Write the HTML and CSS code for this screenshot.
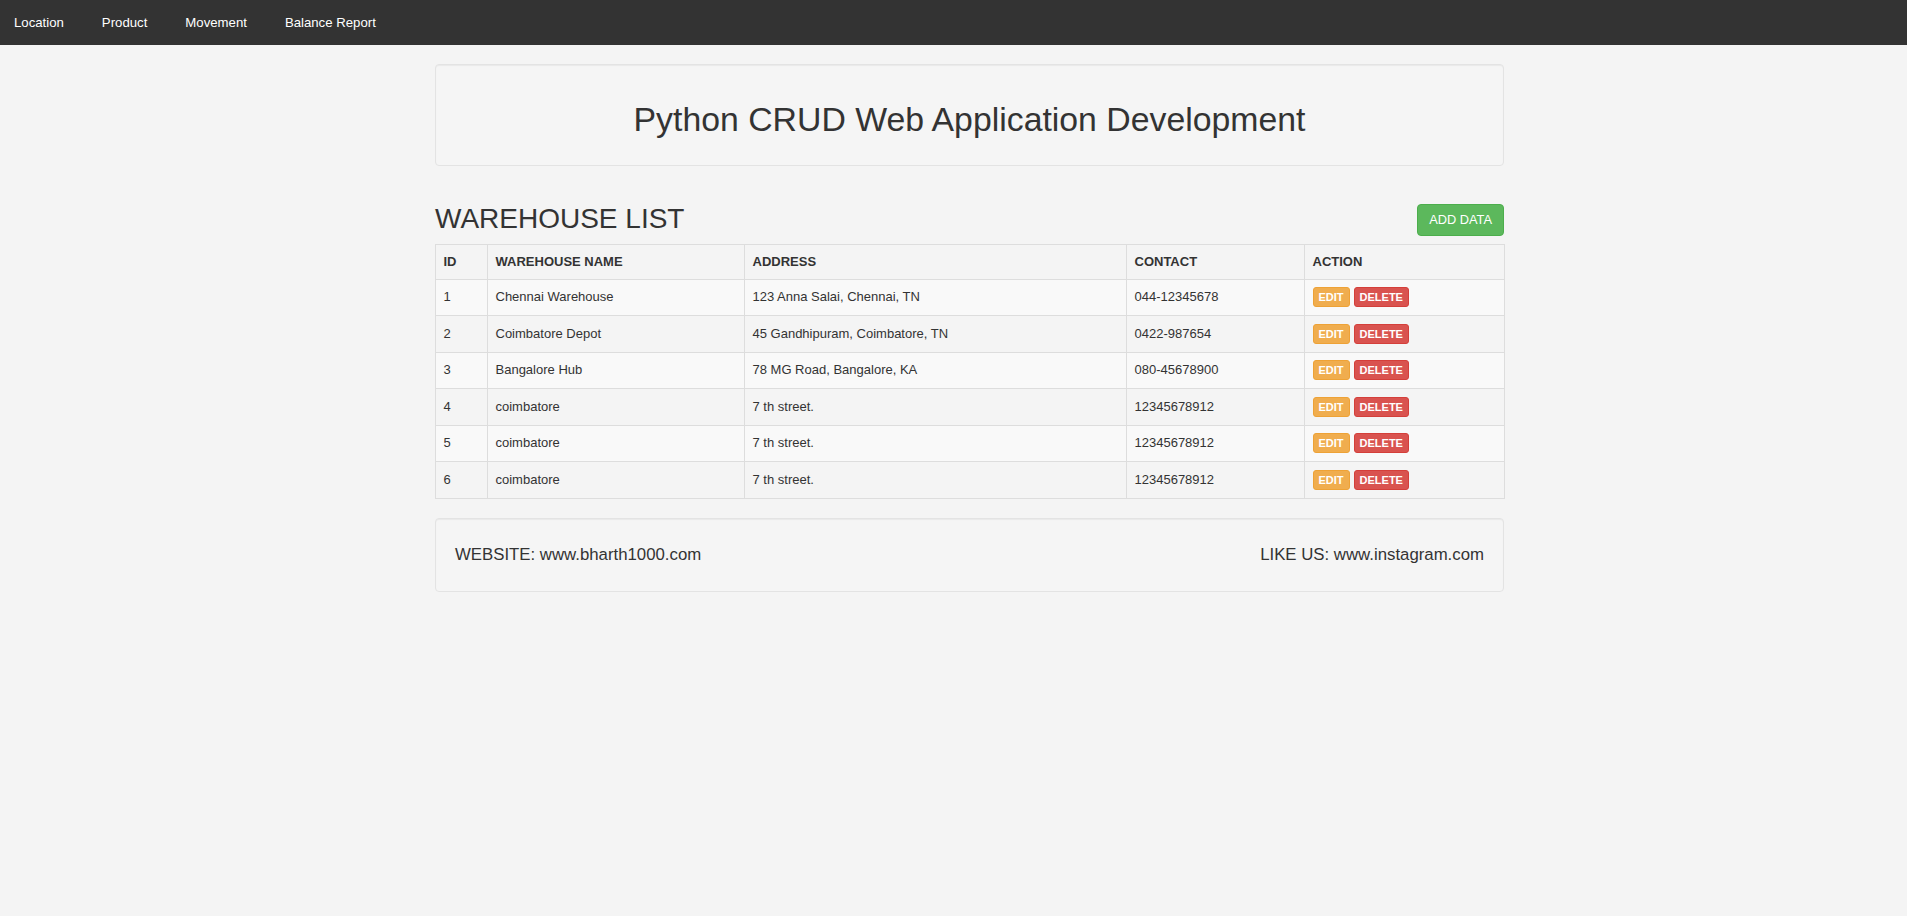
FILE: index.html
```html
<!DOCTYPE html>
<html lang="en">
<head>
<meta charset="utf-8">
<title>Warehouse List</title>
<link rel="stylesheet" href="styles.css">
</head>
<body>
<nav class="topnav">
  <a href="#">Location</a>
  <a href="#">Product</a>
  <a href="#">Movement</a>
  <a href="#">Balance Report</a>
</nav>
<main class="page">
  <header class="banner"><h1>Python CRUD Web Application Development</h1></header>
  <div class="list-head">
    <h2>WAREHOUSE LIST</h2>
    <a class="btn-add" href="#">ADD DATA</a>
  </div>
  <table class="grid">
    <colgroup>
      <col class="c-id"><col class="c-name"><col class="c-addr"><col class="c-contact"><col class="c-action">
    </colgroup>
    <thead>
      <tr><th>ID</th><th>WAREHOUSE NAME</th><th>ADDRESS</th><th>CONTACT</th><th>ACTION</th></tr>
    </thead>
    <tbody>
      <tr><td>1</td><td>Chennai Warehouse</td><td>123 Anna Salai, Chennai, TN</td><td>044-12345678</td><td><div class="acts"><a class="btn-xs edit" href="#">EDIT</a><a class="btn-xs del" href="#">DELETE</a></div></td></tr>
      <tr><td>2</td><td>Coimbatore Depot</td><td>45 Gandhipuram, Coimbatore, TN</td><td>0422-987654</td><td><div class="acts"><a class="btn-xs edit" href="#">EDIT</a><a class="btn-xs del" href="#">DELETE</a></div></td></tr>
      <tr><td>3</td><td>Bangalore Hub</td><td>78 MG Road, Bangalore, KA</td><td>080-45678900</td><td><div class="acts"><a class="btn-xs edit" href="#">EDIT</a><a class="btn-xs del" href="#">DELETE</a></div></td></tr>
      <tr><td>4</td><td>coimbatore</td><td>7 th street.</td><td>12345678912</td><td><div class="acts"><a class="btn-xs edit" href="#">EDIT</a><a class="btn-xs del" href="#">DELETE</a></div></td></tr>
      <tr><td>5</td><td>coimbatore</td><td>7 th street.</td><td>12345678912</td><td><div class="acts"><a class="btn-xs edit" href="#">EDIT</a><a class="btn-xs del" href="#">DELETE</a></div></td></tr>
      <tr><td>6</td><td>coimbatore</td><td>7 th street.</td><td>12345678912</td><td><div class="acts"><a class="btn-xs edit" href="#">EDIT</a><a class="btn-xs del" href="#">DELETE</a></div></td></tr>
    </tbody>
  </table>
  <footer class="footer">
    <span>WEBSITE: www.bharth1000.com</span>
    <span>LIKE US: www.instagram.com</span>
  </footer>
</main>
</body>
</html>
```
FILE: styles.css
```css
html, body {
  margin: 0;
  padding: 0;
}
body {
  background: #f4f4f4;
  color: #333;
  font-family: "Liberation Sans", Arial, sans-serif;
}

.topnav {
  display: flex;
  gap: 38px;
  height: 45px;
  padding-left: 14px;
  background: #333;
}
.topnav a {
  color: #fff;
  text-decoration: none;
  font-size: 13.2px;
  line-height: 45px;
}

.page {
  width: 1069px;
  margin: 19px 0 0 435px;
}

.banner {
  height: 100px;
  border: 1px solid #e3e3e3;
  border-radius: 4px;
  background: #f5f5f5;
  box-shadow: inset 0 1px 1px rgba(0, 0, 0, 0.05);
  text-align: center;
}
.banner h1 {
  margin: 0;
  padding-top: 36px;
  font-size: 33.8px;
  line-height: 37px;
  font-weight: normal;
}

.list-head {
  display: flex;
  justify-content: space-between;
  align-items: flex-start;
  height: 32px;
  margin-top: 38px;
  margin-bottom: 8px;
}
.list-head h2 {
  margin: 0;
  font-size: 28px;
  line-height: 29px;
  font-weight: normal;
}
.btn-add {
  display: block;
  padding: 0 11px;
  line-height: 30px;
  border: 1px solid #4cae4c;
  border-radius: 4px;
  background: #5cb85c;
  color: #fff;
  font-size: 12.8px;
  text-decoration: none;
}

.grid {
  width: 1069px;
  border-collapse: collapse;
  table-layout: fixed;
  font-size: 13px;
}
.c-id { width: 52px; }
.c-name { width: 257px; }
.c-addr { width: 382px; }
.c-contact { width: 178px; }
.c-action { width: 200px; }
.grid th,
.grid td {
  border: 1px solid #ddd;
  padding: 7px 7.5px 7.5px;
  line-height: 19px;
  text-align: left;
  vertical-align: top;
}
.grid th {
  font-weight: bold;
}
.grid td {
  padding-top: 7.5px;
  padding-bottom: 8px;
}
.grid tbody tr:nth-child(odd) {
  background: #f9f9f9;
}

.acts {
  display: flex;
  gap: 4px;
}
.btn-xs {
  display: block;
  box-sizing: border-box;
  height: 20px;
  padding: 0 5px;
  border: 1px solid;
  border-radius: 3px;
  color: #fff;
  font-size: 11px;
  font-weight: bold;
  line-height: 18px;
  text-decoration: none;
}
.btn-xs.edit {
  background: #f0ad4e;
  border-color: #eea236;
}
.btn-xs.del {
  background: #d9534f;
  border-color: #d43f3a;
}

.footer {
  display: flex;
  justify-content: space-between;
  align-items: center;
  height: 72px;
  margin-top: 19px;
  padding: 0 19px;
  border: 1px solid #e3e3e3;
  border-radius: 4px;
  background: #f5f5f5;
  box-shadow: inset 0 1px 1px rgba(0, 0, 0, 0.05);
  font-size: 16.8px;
}
```
